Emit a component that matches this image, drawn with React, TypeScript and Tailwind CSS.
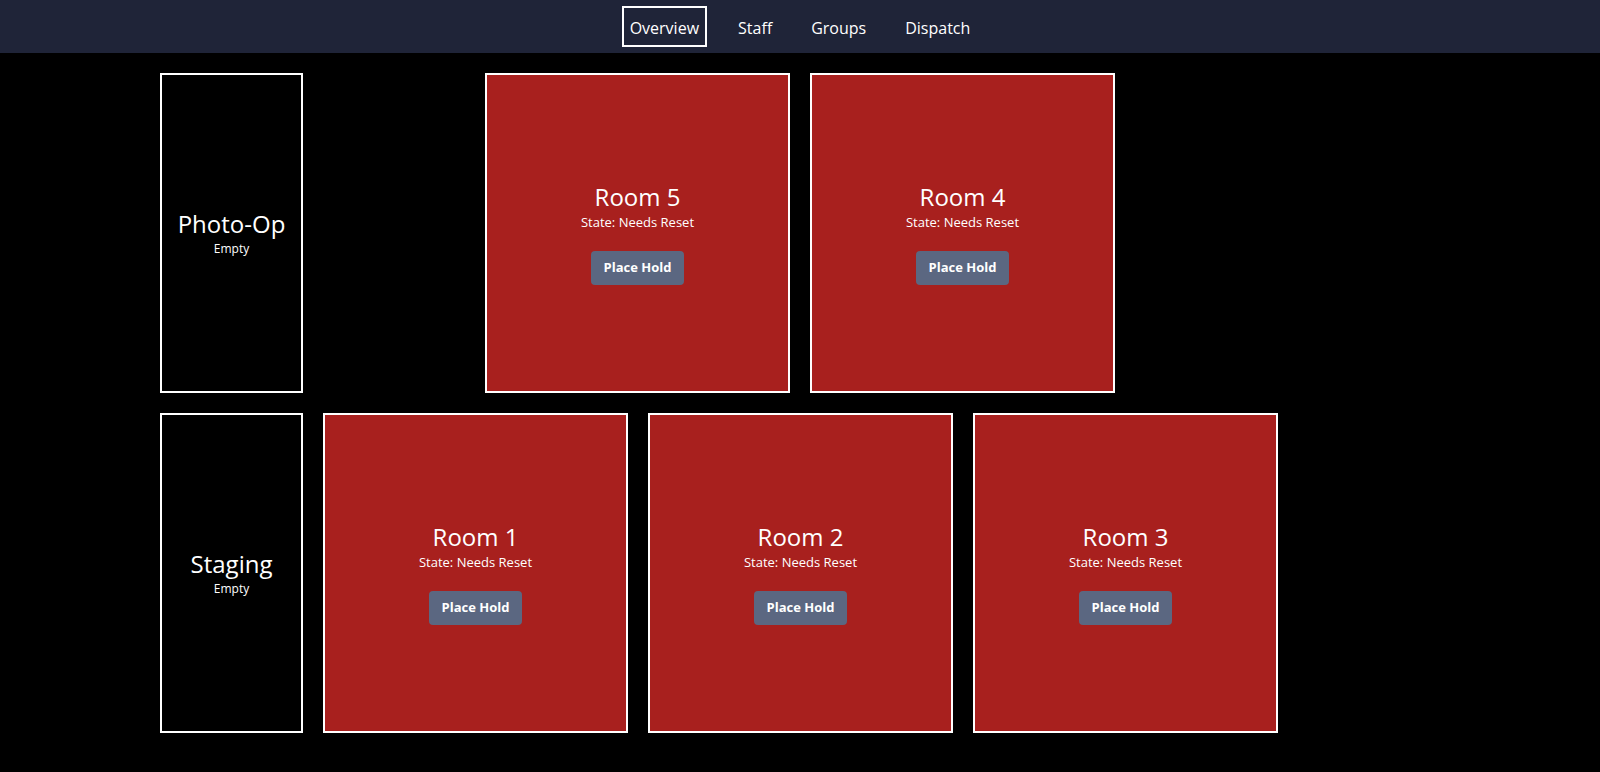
const font = { fontFamily: '"Segoe UI", "Open Sans", sans-serif' };

const navItems = ["Overview", "Staff", "Groups", "Dispatch"];

function NavBar() {
  return (
    <nav className="h-[53px] bg-[#1f2438] flex items-center justify-center gap-[23px]">
      {navItems.map((item, i) => (
        <a
          key={item}
          href="#"
          className={
            "px-[6px] pt-[3px] h-[41px] flex items-center border-2 text-[16px] text-white " +
            (i === 0 ? "border-white" : "border-transparent")
          }
        >
          {item}
        </a>
      ))}
    </nav>
  );
}

function Zone({ name }: { name: string }) {
  return (
    <div className="w-[143px] h-[320px] border-2 border-white bg-black flex flex-col items-center justify-center text-white">
      <div className="text-[24px] leading-[32px]">{name}</div>
      <div className="text-[12px] leading-[18px]">Empty</div>
    </div>
  );
}

function Room({ name }: { name: string }) {
  return (
    <div className="w-[305px] h-[320px] border-2 border-white bg-[#a8201e] flex flex-col items-center justify-center text-white">
      <div className="text-[24px] leading-[32px]">{name}</div>
      <div className="text-[13px] leading-[18px]">State: Needs Reset</div>
      <button className="mt-[20px] h-[34px] px-[13px] rounded bg-[#5b6781] text-white text-[13px] font-bold">
        Place Hold
      </button>
    </div>
  );
}

export default function App() {
  return (
    <div className="min-h-[772px] bg-black" style={font}>
      <NavBar />
      <main className="pl-[160px] pt-[20px] flex flex-col gap-5">
        <div className="flex gap-5">
          <Zone name="Photo-Op" />
          <div className="w-[142px] shrink-0" />
          <Room name="Room 5" />
          <Room name="Room 4" />
        </div>
        <div className="flex gap-5">
          <Zone name="Staging" />
          <Room name="Room 1" />
          <Room name="Room 2" />
          <Room name="Room 3" />
        </div>
      </main>
    </div>
  );
}
